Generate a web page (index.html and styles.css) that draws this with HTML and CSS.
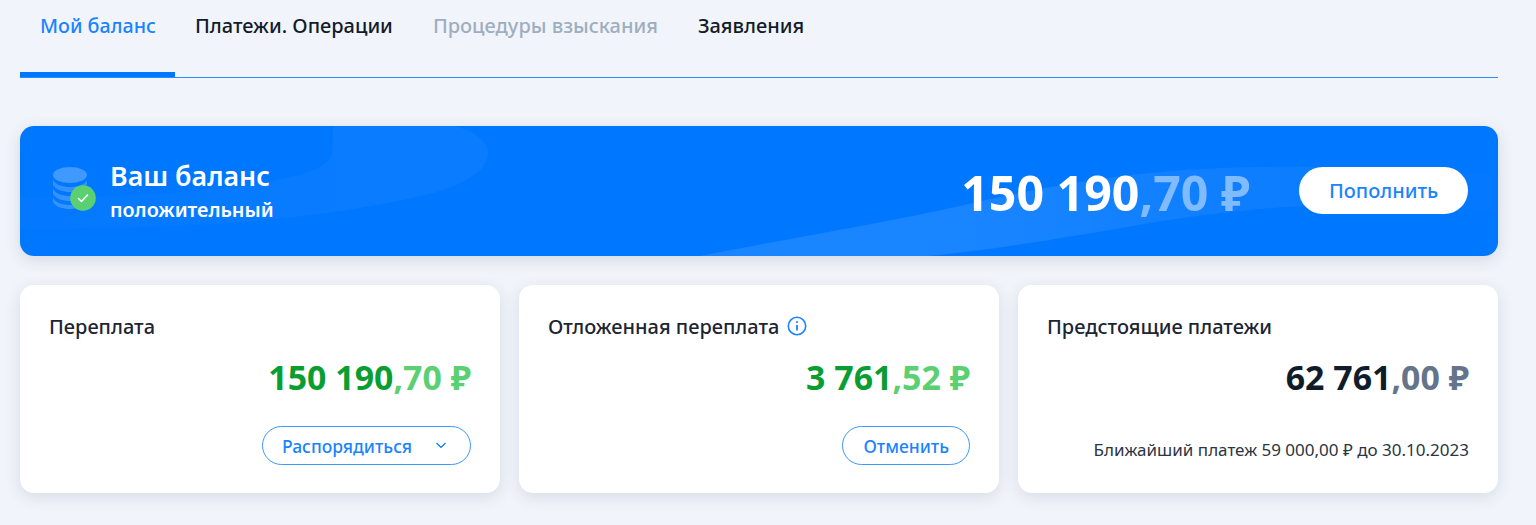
FILE: index.html
```html
<!DOCTYPE html>
<html lang="ru">
<head>
    <meta charset="UTF-8">
    <title>Мой баланс</title>
    <link rel="stylesheet" href="styles.css">
</head>
<body>
    <div class="tabs">
        <a class="tab active">Мой баланс</a>
        <a class="tab">Платежи. Операции</a>
        <a class="tab disabled">Процедуры взыскания</a>
        <a class="tab">Заявления</a>
    </div>

    <div class="banner">
        <svg class="banner-bg" viewBox="0 0 1478 130" preserveAspectRatio="none">
            <defs>
                <linearGradient id="blobFade" x1="0" y1="0" x2="420" y2="0" gradientUnits="userSpaceOnUse">
                    <stop offset="0" stop-color="#fff" stop-opacity="0.015"/>
                    <stop offset="1" stop-color="#fff" stop-opacity="0.04"/>
                </linearGradient>
                <linearGradient id="waveFade" x1="680" y1="0" x2="1478" y2="0" gradientUnits="userSpaceOnUse">
                    <stop offset="0" stop-color="#fff" stop-opacity="0.1"/>
                    <stop offset="0.35" stop-color="#fff" stop-opacity="0.1"/>
                    <stop offset="1" stop-color="#fff" stop-opacity="0.01"/>
                </linearGradient>
            </defs>
            <path d="M313 0C312 10 313 20 312 27C310 40 290 48 247 56C180 68 80 72 0 72V103C90 103 180 100 247 94C310 88 370 78 413 67C445 58 468 45 468 27C468 15 455 5 433 0Z" fill="url(#blobFade)"/>
            <path d="M680 130C770 112 860 98 940 80C1000 66 1050 56 1120 48C1230 36 1360 40 1478 50V86C1408 80 1338 77 1267 81C1207 85 1157 92 1107 101C1037 113 977 123 909 130Z" fill="url(#waveFade)"/>
        </svg>
        <div class="banner-left">
            <svg class="coins" width="46" height="46" viewBox="0 0 46 46">
                <ellipse cx="18" cy="8" rx="17" ry="8" fill="#fff" opacity="0.25"/>
                <path d="M1 13c3 5 10 7 17 7s14-2 17-7v5c-3 5-10 7-17 7S4 23 1 18z" fill="#fff" opacity="0.2"/>
                <path d="M1 22c3 5 10 7 17 7s14-2 17-7v5c-3 5-10 7-17 7S4 32 1 27z" fill="#fff" opacity="0.2"/>
                <path d="M1 31c3 5 10 7 17 7s14-2 17-7v4c-3 5-10 7-17 7S4 40 1 35z" fill="#fff" opacity="0.2"/>
                <circle cx="31" cy="31" r="12.800" fill="#5bd072"/>
                <path d="M26.500 31.500l3 3 6-6.500" fill="none" stroke="#fff" stroke-width="1.500" stroke-linecap="round" stroke-linejoin="round"/>
            </svg>
            <div>
                <div class="banner-title">Ваш баланс</div>
                <div class="banner-sub">положительный</div>
            </div>
        </div>
        <div class="banner-right">
            <div class="banner-sum">150 190<span class="cents">,70 ₽</span></div>
            <button class="btn-white">Пополнить</button>
        </div>
    </div>

    <div class="cards">
        <div class="card">
            <div class="card-title">Переплата</div>
            <div class="sum green">150 190<span class="cents">,70 ₽</span></div>
            <div class="card-footer">
                <button class="btn-outline btn-menu">
                    Распорядиться
                    <svg width="12" height="7" viewBox="0 0 12 7"><path d="M1.500 1l4.500 4.500L10.500 1" fill="none" stroke="#0077ff" stroke-width="1.200"/></svg>
                </button>
            </div>
        </div>
        <div class="card">
            <div class="card-title">
                Отложенная переплата
                <svg class="info" width="20" height="20" viewBox="0 0 20 20">
                    <circle cx="10" cy="10" r="8.700" fill="none" stroke="#1a84ff" stroke-width="1.600"/>
                    <circle cx="10" cy="6" r="1.100" fill="#1a84ff"/>
                    <path d="M10 9v5.500" stroke="#1a84ff" stroke-width="1.800"/>
                </svg>
            </div>
            <div class="sum green">3 761<span class="cents">,52 ₽</span></div>
            <div class="card-footer">
                <button class="btn-outline">Отменить</button>
            </div>
        </div>
        <div class="card">
            <div class="card-title">Предстоящие платежи</div>
            <div class="sum dark">62 761<span class="cents">,00 ₽</span></div>
            <div class="card-footer">
                <div class="next-payment">Ближайший платеж 59 000,00 ₽ до 30.10.2023</div>
            </div>
        </div>
    </div>
</body>
</html>
```

FILE: styles.css
```css
* {
    margin: 0;
    padding: 0;
    box-sizing: border-box;
    font-family: "Noto Sans", "Open Sans", sans-serif;
}

body {
    background: #f1f4fa;
    padding: 0 38px 0 20px;
    height: 525px;
    overflow: hidden;
}

.tabs {
    display: flex;
    height: 78px;
    border-bottom: 1px solid #2b8cff;
}

.tab {
    height: 77px;
    padding: 13px 20px 0;
    font-size: 20px;
    font-weight: 500;
    line-height: 26px;
    white-space: nowrap;
    color: #111c2b;
}

.tab.active {
    width: 155px;
    color: #1a84ff;
    font-size: 19.700px;
    border-bottom: 5px solid #0077ff;
}

.tab.disabled {
    color: #9eaebf;
}

.banner {
    position: relative;
    display: flex;
    justify-content: space-between;
    align-items: center;
    height: 130px;
    margin-top: 48px;
    padding: 0 30px;
    background: #0077ff;
    border-radius: 14px;
    box-shadow: 0 4px 16px rgba(30, 50, 90, 0.14);
    overflow: hidden;
}

.banner-bg {
    position: absolute;
    top: 0;
    left: 0;
    width: 100%;
    height: 100%;
}

.banner-left,
.banner-right {
    position: relative;
    display: flex;
    align-items: center;
}

.coins {
    margin: 0 12px 2px 2px;
}

.banner-title {
    padding-top: 1px;
    font-size: 26.800px;
    font-weight: 600;
    line-height: 34px;
    color: #fff;
}

.banner-sub {
    margin-top: 2px;
    font-size: 19.800px;
    font-weight: 600;
    line-height: 30px;
    color: #fff;
}

.banner-sum {
    padding-top: 2px;
    font-size: 48.300px;
    font-weight: 700;
    line-height: 60px;
    color: #fff;
}

.banner-sum .cents {
    color: #80bbff;
}

.btn-white {
    width: 169px;
    height: 47px;
    margin: 0 0 2px 49px;
    background: #fff;
    border: none;
    border-radius: 24px;
    font-size: 20px;
    font-weight: 500;
    color: #1a84ff;
}

.cards {
    display: grid;
    grid-template-columns: repeat(3, 1fr);
    gap: 19px;
    margin-top: 29px;
}

.card {
    display: flex;
    flex-direction: column;
    height: 208px;
    padding: 28px 29px;
    background: #fff;
    border-radius: 14px;
    box-shadow: 0 4px 16px rgba(30, 50, 90, 0.12);
}

.card-title {
    display: flex;
    align-items: center;
    gap: 8px;
    height: 26px;
    font-size: 20px;
    font-weight: 500;
    color: #1c2532;
}

.sum {
    margin-top: 14px;
    font-size: 33.900px;
    font-weight: 700;
    line-height: 48px;
    text-align: right;
}

.green {
    color: #0a9e32;
}

.green .cents {
    color: #5bd072;
}

.dark {
    color: #111c2b;
}

.dark .cents {
    color: #64748b;
}

.card-footer {
    display: flex;
    justify-content: flex-end;
    align-items: center;
    margin-top: auto;
    height: 39px;
}

.btn-outline {
    height: 39px;
    padding: 0 20px;
    background: #fff;
    border: 1px solid #3d97ff;
    border-radius: 20px;
    font-size: 17.500px;
    font-weight: 500;
    color: #1a84ff;
}

.btn-menu {
    display: flex;
    align-items: center;
    gap: 23px;
    padding: 0 23px 0 19px;
}

.next-payment {
    margin-top: 8px;
    font-size: 17px;
    color: #2b3543;
}
```
